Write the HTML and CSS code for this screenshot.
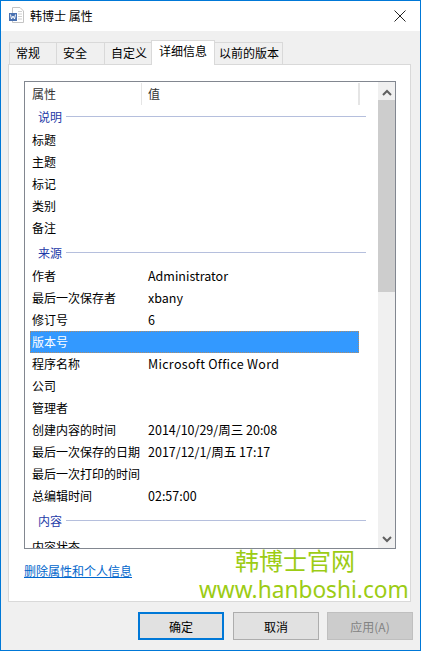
FILE: index.html
```html
<!DOCTYPE html>
<html lang="zh-CN">
<head>
  <meta charset="UTF-8" />
  <title>韩博士 属性</title>
  <link rel="stylesheet" href="styles.css">
</head>
<body>
  <div class="window">
    <div class="titlebar">
      <svg class="doc-icon" width="16" height="18" viewBox="0 0 16 18">
        <path d="M3.500 .5H11L14.500 4V15.500H3.500Z" fill="#fff" stroke="#c4c4c4"/>
        <path d="M9 4.500H13M9 7H13M9 9.500H13M9 12H13" stroke="#d0d0d0"/>
        <rect x="0" y="6" width="8" height="8" fill="#4a71b0"/>
        <path d="M1.500 7.500L2.500 12L4 9L5.500 12L6.500 7.500" fill="none" stroke="#fff"/>
      </svg>
      <span class="title">韩博士 属性</span>
      <svg class="close" width="12" height="12" viewBox="0 0 12 12">
        <path d="M.5 .5L11.500 11.500M11.500 .5L.5 11.500" stroke="#222" stroke-width="1"/>
      </svg>
    </div>

    <div class="body">
      <div class="tabs">
        <div class="tab tab-1">常规</div>
        <div class="tab tab-2">安全</div>
        <div class="tab tab-3">自定义</div>
        <div class="tab active">详细信息</div>
        <div class="tab tab-5">以前的版本</div>
      </div>

      <div class="panel">
        <div class="listbox">
          <div class="list">
            <div class="list-head">
              <div class="col-name">属性</div>
              <div class="col-value">值</div>
              <div class="col-rest"></div>
            </div>
            <div class="group first"><span>说明</span><i></i></div>
            <div class="row"><span class="k">标题</span></div>
            <div class="row"><span class="k">主题</span></div>
            <div class="row"><span class="k">标记</span></div>
            <div class="row"><span class="k">类别</span></div>
            <div class="row"><span class="k">备注</span></div>
            <div class="group"><span>来源</span><i></i></div>
            <div class="row"><span class="k">作者</span><span class="v">Administrator</span></div>
            <div class="row"><span class="k">最后一次保存者</span><span class="v">xbany</span></div>
            <div class="row"><span class="k">修订号</span><span class="v">6</span></div>
            <div class="row selected"><span class="k">版本号</span></div>
            <div class="row"><span class="k">程序名称</span><span class="v wide">Microsoft Office Word</span></div>
            <div class="row"><span class="k">公司</span></div>
            <div class="row"><span class="k">管理者</span></div>
            <div class="row"><span class="k">创建内容的时间</span><span class="v">2014/10/29/周三 20:08</span></div>
            <div class="row"><span class="k">最后一次保存的日期</span><span class="v">2017/12/1/周五 17:17</span></div>
            <div class="row"><span class="k">最后一次打印的时间</span></div>
            <div class="row"><span class="k">总编辑时间</span><span class="v">02:57:00</span></div>
            <div class="group"><span>内容</span><i></i></div>
            <div class="row last"><span class="k">内容状态</span></div>
          </div>
          <div class="scrollbar">
            <div class="arrow up">
              <svg width="10" height="7" viewBox="0 0 10 7"><path d="M1 6L5 2L9 6" fill="none" stroke="#606060" stroke-width="2"/></svg>
            </div>
            <div class="thumb"></div>
            <div class="track"></div>
            <div class="arrow">
              <svg width="10" height="7" viewBox="0 0 10 7"><path d="M1 1L5 5L9 1" fill="none" stroke="#606060" stroke-width="2"/></svg>
            </div>
          </div>
        </div>
        <a class="remove-link" href="#">删除属性和个人信息</a>
      </div>

      <div class="buttons">
        <button class="btn default">确定</button>
        <button class="btn">取消</button>
        <button class="btn disabled">应用(A)</button>
      </div>
    </div>

    <div class="watermark">
      <div class="wm-cn">韩博士官网</div>
      <div class="wm-url">www.hanboshi.com</div>
    </div>
  </div>
</body>
</html>
```

FILE: styles.css
```css
* {
  box-sizing: border-box;
}

html, body {
  margin: 0;
  height: 100%;
}

body {
  font-family: "Noto Sans CJK SC", "Noto Sans", sans-serif;
  font-size: 12px;
  color: #000;
  background: #f0f0f0;
  overflow: hidden;
}

.window {
  position: relative;
  width: 421px;
  height: 651px;
  border: 1px solid #0078d7;
  background: #f0f0f0;
  display: flex;
  flex-direction: column;
}

.titlebar {
  height: 30px;
  background: #fff;
  display: flex;
  align-items: center;
  padding: 0 14px 0 8px;
  flex: none;
}

.doc-icon {
  flex: none;
}

.title {
  margin-left: 5px;
  flex: 1;
  line-height: 30px;
}

.body {
  flex: 1;
  padding: 11px 9px 0 7px;
}

.tabs {
  display: flex;
  height: 22px;
  padding-left: 2px;
  align-items: flex-end;
}

.tab {
  height: 22px;
  line-height: 20px;
  padding-left: 6px;
  background: #f0f0f0;
  border: 1px solid #d9d9d9;
  border-bottom: none;
  margin-left: -1px;
}

.tab-1 { width: 48px; }
.tab-2 { width: 49px; }
.tab-3 { width: 48px; padding-left: 6px; }
.tab-5 { width: 69px; padding-left: 4px; }

.tab.active {
  position: relative;
  z-index: 1;
  width: 64px;
  height: 25px;
  line-height: 20px;
  background: #fff;
  margin-bottom: -1px;
  padding-left: 7px;
}

.panel {
  height: 538px;
  background: #fff;
  border: 1px solid #d9d9d9;
  padding: 16px 14px 0 15px;
}

.listbox {
  height: 468px;
  border: 1px solid #828790;
  display: flex;
  overflow: hidden;
}

.list {
  flex: 1;
  min-width: 0;
  padding-top: 1px;
  overflow: hidden;
}

.list-head {
  display: flex;
  height: 22px;
  line-height: 22px;
  color: #333;
}

.list-head div {
  border-right: 1px solid #e5e5e5;
}

.col-name {
  width: 117px;
  padding-left: 7px;
}

.col-value {
  width: 217px;
  padding-left: 6px;
}

.group {
  display: flex;
  align-items: center;
  height: 24px;
  margin-top: 2px;
  padding: 0 0 2px 13px;
  color: #1e3aa8;
}

.group.first {
  margin-top: 0;
  padding-bottom: 1px;
}

.group i {
  display: block;
  width: 300px;
  height: 1px;
  margin-left: 4px;
  background: #b5bfdd;
}

.row {
  display: flex;
  height: 22px;
  line-height: 22px;
  width: 334px;
  white-space: nowrap;
}

.row.selected {
  background: #3399ff;
  color: #fff;
  margin-left: 5px;
  width: 329px;
  line-height: 20px;
  border: 1px dotted #a98c6e;
}

.row.selected .k {
  margin-left: 1px;
  width: 113px;
  padding-left: 0;
}

.row.last {
  margin-top: 3px;
}

.k {
  width: 123px;
  flex: none;
  padding-left: 7px;
}

.v {
  font-size: 12.5px;
}

.v.wide {
  letter-spacing: .3px;
}

.scrollbar {
  flex: none;
  width: 17px;
  background: #f0f0f0;
  display: flex;
  flex-direction: column;
}

.arrow {
  height: 17px;
  flex: none;
  display: flex;
  align-items: center;
  justify-content: center;
}

.arrow.up {
  height: 18px;
  padding-top: 2px;
}

.thumb {
  height: 192px;
  flex: none;
  background: #cdcdcd;
}

.track {
  flex: 1;
}

.remove-link {
  display: block;
  margin-top: 13px;
  line-height: 17px;
  color: #0066cc;
  text-decoration: underline;
}

.buttons {
  display: flex;
  justify-content: flex-end;
  gap: 8px;
  padding-top: 10px;
  margin-right: -2px;
}

.btn {
  width: 86px;
  height: 28px;
  padding: 0;
  font: inherit;
  background: #e1e1e1;
  border: 1px solid #adadad;
  color: #000;
}

.btn.default {
  border: 2px solid #0078d7;
  margin-right: 1px;
}

.btn.disabled {
  background: #cccccc;
  border-color: #bfbfbf;
  color: #838383;
}

/* site stamp sits over the dialog */
.watermark {
  position: absolute;
  left: 198px;
  top: 544px;
  color: #9ccc14;
  white-space: nowrap;
}

.wm-cn {
  font-size: 24px;
  line-height: 30px;
  padding-left: 36px;
}

.wm-url {
  font-family: "Noto Sans", sans-serif;
  font-size: 22.7px;
  line-height: 30px;
}
```
